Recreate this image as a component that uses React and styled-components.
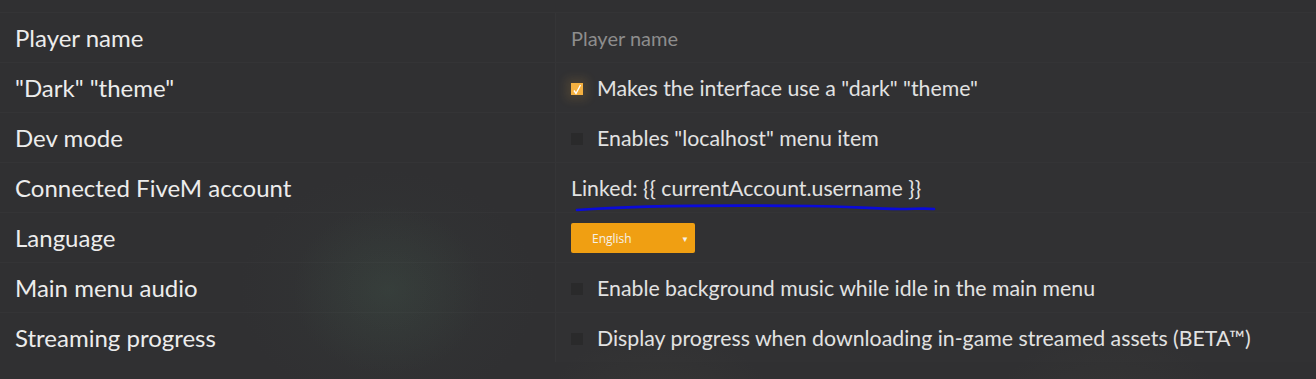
import React from 'react';
import styled, { createGlobalStyle } from 'styled-components';

const Global = createGlobalStyle`
html, body {
    margin: 0;
    padding: 0;
    background: #303032;
}
`

const Page = styled.div`
position: relative;
width: 1316px;
height: 379px;
overflow: hidden;
padding-top: 12px;
box-sizing: border-box;
font-family: Lato, "Noto Sans", sans-serif;
background:
    radial-gradient(ellipse 95px 85px at 388px 290px, rgba(70, 95, 80, 0.22), rgba(70, 95, 80, 0) 100%),
    radial-gradient(ellipse 150px 120px at 388px 290px, rgba(60, 75, 68, 0.18), rgba(60, 75, 68, 0) 100%),
    radial-gradient(ellipse 120px 90px at 660px 420px, rgba(90, 90, 70, 0.15), rgba(90, 90, 70, 0) 100%),
    radial-gradient(ellipse 120px 90px at 1110px 420px, rgba(90, 90, 70, 0.12), rgba(90, 90, 70, 0) 100%),
    #303032;
`

const Row = styled.div`
display: grid;
grid-template-columns: 555px 1fr;
height: 50px;
border-top: 1px solid rgba(255, 255, 255, 0.025);
box-sizing: border-box;
`

const Label = styled.div`
display: flex;
align-items: center;
padding-left: 15px;
font-size: 24px;
color: #ececec;
`

const Value = styled.div`
display: flex;
align-items: center;
gap: 14px;
padding-left: 15px;
font-size: ${p => p.placeholder ? '20px' : '21.3px'};
color: ${p => p.placeholder ? '#8d8d8d' : '#e2e2e2'};
border-left: 1px solid rgba(255, 255, 255, 0.02);
background: rgba(255, 255, 255, 0.008);
`

const Box = styled.span`
flex: none;
width: 12px;
height: 12px;
margin-top: 2px;
display: flex;
align-items: center;
justify-content: center;
background: ${p => p.checked ? '#f5b141' : '#2a2a2b'};
box-shadow: ${p => p.checked ? '0 0 10px 5px rgba(245, 177, 65, 0.12)' : 'none'};
`

const Select = styled.div`
display: flex;
align-items: center;
justify-content: space-between;
width: 124px;
height: 30px;
margin-top: 1px;
padding: 0 6px 0 21px;
box-sizing: border-box;
background: #f09f12;
border-radius: 2px;
font-family: "Open Sans", sans-serif;
font-size: 12px;
color: #f5f1e8;
& span {
    font-size: 8px;
}
`

const Scribble = styled.svg`
position: absolute;
left: 570px;
top: 200px;
`

function Check({ checked }) {
    return (
        <Box checked={checked}>
            {checked && (
                <svg width="12" height="12" viewBox="0 0 12 12">
                    <path d="M3 7.5 L5 10.5 L9.5 2" stroke="#fff" strokeWidth="1.4" fill="none" />
                </svg>
            )}
        </Box>
    )
}

export default function App() {
    return (
        <Page>
            <Global />
            <Row>
                <Label>Player name</Label>
                <Value placeholder="1">Player name</Value>
            </Row>
            <Row>
                <Label>"Dark" "theme"</Label>
                <Value><Check checked />Makes the interface use a "dark" "theme"</Value>
            </Row>
            <Row>
                <Label>Dev mode</Label>
                <Value><Check />Enables "localhost" menu item</Value>
            </Row>
            <Row>
                <Label>Connected FiveM account</Label>
                <Value>Linked: {'{{'} currentAccount.username {'}}'}</Value>
            </Row>
            <Row>
                <Label>Language</Label>
                <Value>
                    <Select>English<span>▼</span></Select>
                </Value>
            </Row>
            <Row>
                <Label>Main menu audio</Label>
                <Value><Check />Enable background music while idle in the main menu</Value>
            </Row>
            <Row>
                <Label>Streaming progress</Label>
                <Value><Check />Display progress when downloading in-game streamed assets (BETA™)</Value>
            </Row>
            <Scribble width="370" height="16" viewBox="0 0 370 16">
                <path d="M7 10 C 60 6, 150 5, 240 6 C 280 6, 300 9, 330 9 C 345 9, 355 8, 364 9" stroke="#0a0ad8" strokeWidth="2.6" fill="none" strokeLinecap="round" />
            </Scribble>
        </Page>
    );
}
